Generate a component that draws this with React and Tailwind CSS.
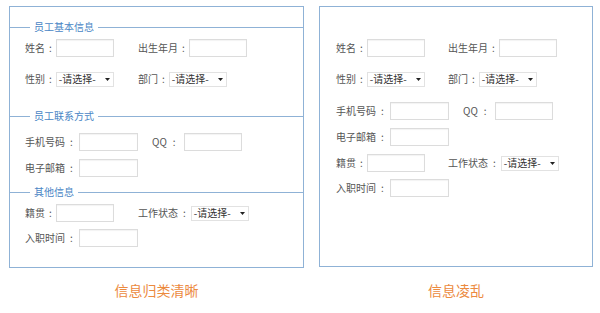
import React from "react";

const FONT = { fontFamily: '"Noto Sans CJK SC", "Noto Sans", sans-serif' };

function Label({ text, colonL = 4, colonR = 4 }) {
  return (
    <span className="text-[10px] leading-[12px] text-[#555] whitespace-nowrap flex items-center">
      {text}
      <span style={{ marginLeft: colonL, marginRight: colonR }}>:</span>
    </span>
  );
}

function Input({ w = 58 }) {
  return (
    <div
      className="h-[18px] bg-white border border-[#dcdcdc] shadow-[inset_0_1px_1px_rgba(0,0,0,0.05)]"
      style={{ width: w }}
    />
  );
}

function Select() {
  return (
    <div className="w-[58px] h-[15px] bg-white border border-[#e2e2e2] flex items-center justify-between pl-[2px] pr-[3px]">
      <span className="text-[10px] leading-[12px] text-[#333]">-请选择-</span>
      <svg width="5" height="3" viewBox="0 0 5 3">
        <path d="M0 0 H5 L2.5 3 Z" fill="#222" />
      </svg>
    </div>
  );
}

function Legend({ text, mt }) {
  return (
    <div className="flex items-center h-[12px]" style={{ marginTop: mt }}>
      <div className="w-[20px] h-px bg-[#8fb2d6]" />
      <span className="text-[10px] leading-[12px] text-[#4a86c5] px-[4px] whitespace-nowrap">{text}</span>
      <div className="flex-1 h-px bg-[#8fb2d6]" />
    </div>
  );
}

function Row({ mt, children }) {
  return (
    <div className="flex items-center h-[18px]" style={{ marginTop: mt }}>
      {children}
    </div>
  );
}

function Field({ label, children, w, colonL, colonR }) {
  return (
    <div className="flex items-center" style={w ? { width: w } : undefined}>
      <Label text={label} colonL={colonL} colonR={colonR} />
      {children}
    </div>
  );
}

export default function App() {
  return (
    <div className="w-[600px] h-[313px] bg-white flex pt-[6px] pl-[9px] gap-[15px]" style={FONT}>
      <div className="flex flex-col items-center">
        <div className="w-[295px] h-[262px] border border-[#8fb2d6] flex flex-col">
          <Legend text="员工基本信息" mt={14} />
          <div className="pl-[15px] flex flex-col">
            <Row mt={6}>
              <Field label="姓名" w={113}><Input /></Field>
              <Field label="出生年月"><Input /></Field>
            </Row>
            <Row mt={13}>
              <Field label="性别" w={113}><Select /></Field>
              <Field label="部门"><Select /></Field>
            </Row>
          </div>
          <Legend text="员工联系方式" mt={22} />
          <div className="pl-[15px] flex flex-col">
            <Row mt={11}>
              <Field label="手机号码" w={127} colonL={5} colonR={6}><Input w={59} /></Field>
              <Field label="QQ" colonL={6} colonR={8}><Input /></Field>
            </Row>
            <Row mt={8}>
              <Field label="电子邮箱" colonL={5} colonR={6}><Input w={59} /></Field>
            </Row>
          </div>
          <Legend text="其他信息" mt={9} />
          <div className="pl-[15px] flex flex-col">
            <Row mt={6}>
              <Field label="籍贯" w={113}><Input /></Field>
              <Field label="工作状态" colonL={5} colonR={5}><Select /></Field>
            </Row>
            <Row mt={7}>
              <Field label="入职时间" colonL={5} colonR={6}><Input w={59} /></Field>
            </Row>
          </div>
        </div>
        <div className="mt-[12px] text-[14px] leading-[20px] text-[#ec8a3e]">信息归类清晰</div>
      </div>

      <div className="flex flex-col items-center">
        <div className="w-[274px] h-[261px] border border-[#8fb2d6] flex flex-col pl-[16px]">
          <Row mt={32}>
            <Field label="姓名" w={112}><Input /></Field>
            <Field label="出生年月"><Input /></Field>
          </Row>
          <Row mt={13}>
            <Field label="性别" w={112}><Select /></Field>
            <Field label="部门"><Select /></Field>
          </Row>
          <Row mt={14}>
            <Field label="手机号码" w={127} colonL={5} colonR={6}><Input w={59} /></Field>
            <Field label="QQ" colonL={6} colonR={8}><Input /></Field>
          </Row>
          <Row mt={8}>
            <Field label="电子邮箱" colonL={5} colonR={6}><Input w={59} /></Field>
          </Row>
          <Row mt={8}>
            <Field label="籍贯" w={112}><Input /></Field>
            <Field label="工作状态" colonL={5} colonR={5}><Select /></Field>
          </Row>
          <Row mt={7}>
            <Field label="入职时间" colonL={5} colonR={6}><Input w={59} /></Field>
          </Row>
        </div>
        <div className="mt-[13px] text-[14px] leading-[20px] text-[#ec8a3e]">信息凌乱</div>
      </div>
    </div>
  );
}
